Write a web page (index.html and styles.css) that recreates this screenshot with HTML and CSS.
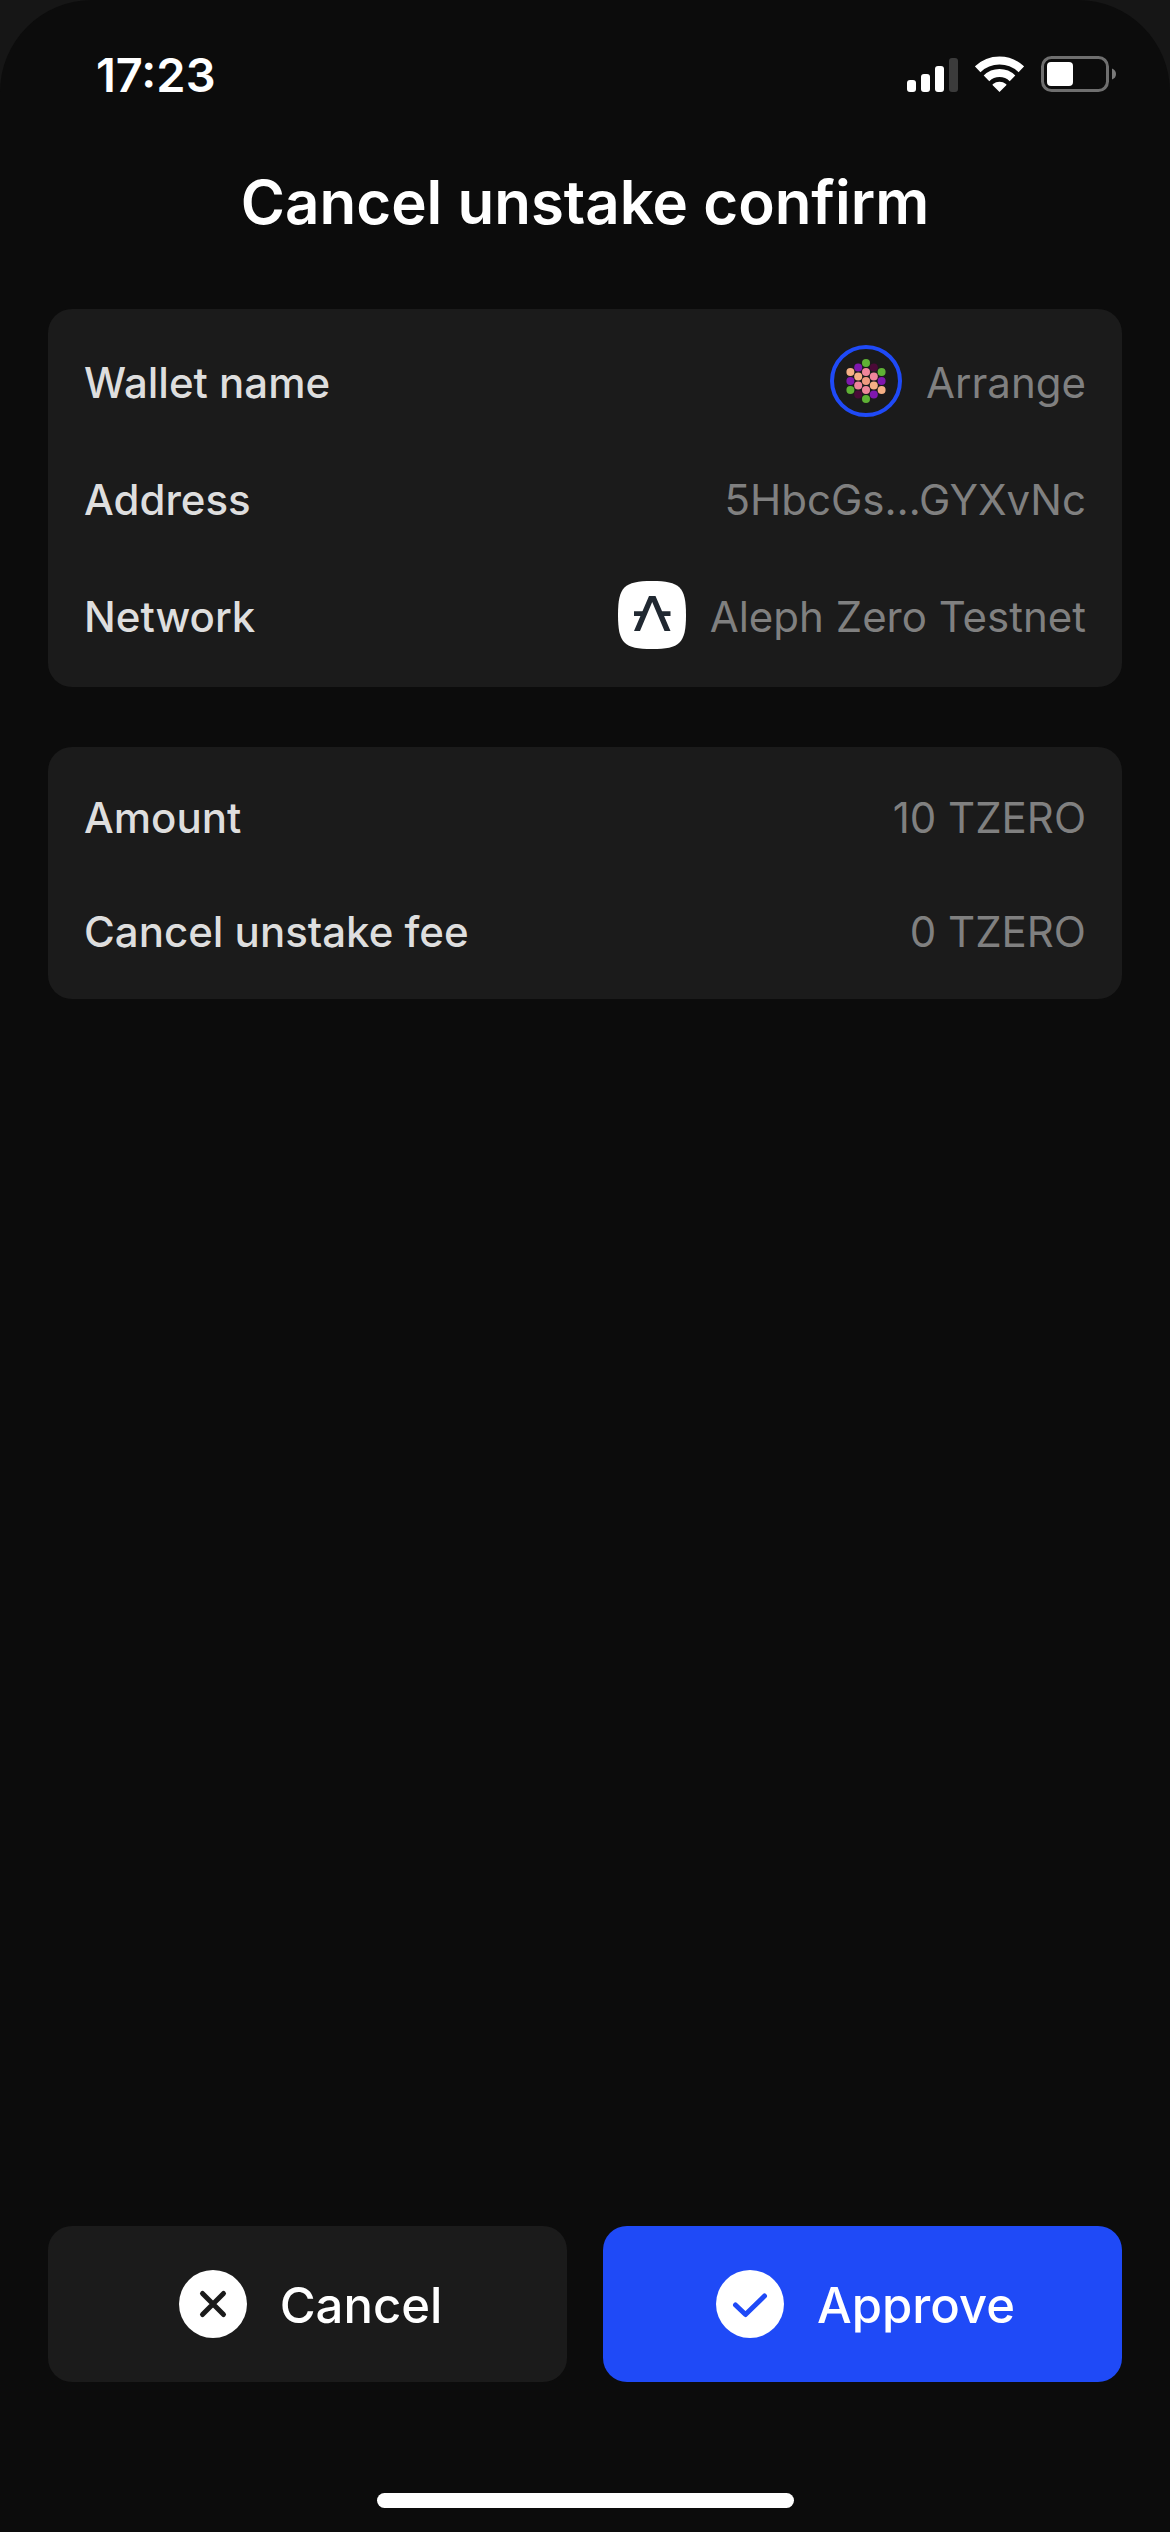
FILE: index.html
```html
<!DOCTYPE html>
<html lang="en">
<head>
<meta charset="utf-8">
<meta name="viewport" content="width=device-width, initial-scale=1">
<title>Cancel unstake confirm</title>
<link rel="stylesheet" href="styles.css">
</head>
<body>
<div class="screen">
  <header class="status">
    <time class="status-time">17:23</time>
    <div class="status-icons">
      <svg width="51" height="36" viewBox="0 0 51 36" fill="#fff" role="img" aria-label="Signal">
        <rect x="0" y="24" width="9" height="12" rx="3"/>
        <rect x="14" y="18" width="9" height="18" rx="3"/>
        <rect x="28" y="10" width="9" height="26" rx="3"/>
        <rect x="42" y="2" width="9" height="34" rx="3" fill="#3b3b3b"/>
      </svg>
      <svg width="49" height="36" viewBox="0 0 49 36" role="img" aria-label="Wi-Fi">
        <g fill="none" stroke="#fff" stroke-width="8">
          <path d="M2.7 13.3A31.5 31.5 0 0 1 46.3 13.3"/>
          <path d="M11.5 22.3A18.6 18.6 0 0 1 37.5 22.3"/>
        </g>
        <path d="M24.500 36L17.700 29.300Q17.200 28.600 18 28A10.500 10.500 0 0 1 31 28Q31.800 28.600 31.300 29.300Z" fill="#fff"/>
      </svg>
      <svg width="75" height="36" viewBox="0 0 75 36" role="img" aria-label="Battery">
        <rect x="1.500" y="1.500" width="65" height="33" rx="9" fill="none" stroke="#6f6f6f" stroke-width="3"/>
        <rect x="6" y="6" width="26" height="24" rx="4" fill="#fff"/>
        <path d="M71 12.500Q75 14 75 18T71 23.500Z" fill="#7a7a7a"/>
      </svg>
    </div>
  </header>

  <h1 class="title">Cancel unstake confirm</h1>

  <main class="content">
    <dl class="card">
      <div class="row">
        <dt class="label">Wallet name</dt>
        <dd class="value">
          <svg width="72" height="72" viewBox="0 0 72 72" aria-hidden="true">
            <circle cx="36" cy="36" r="34" fill="none" stroke="#1f4af7" stroke-width="4"/>
            <g fill="#5fb135"><circle cx="36" cy="18" r="4"/><circle cx="51.600" cy="27" r="4"/><circle cx="20.400" cy="45" r="4"/><circle cx="36" cy="54" r="4"/></g>
            <g fill="#7f17ae"><circle cx="28.200" cy="22.500" r="4"/><circle cx="20.400" cy="36" r="4"/><circle cx="51.600" cy="36" r="4"/><circle cx="43.800" cy="49.500" r="4"/></g>
            <g fill="#4a0a37"><circle cx="43.800" cy="22.500" r="4"/><circle cx="28.200" cy="49.500" r="4"/></g>
            <g fill="#f5b085"><circle cx="20.400" cy="27" r="4"/><circle cx="28.200" cy="31.500" r="4"/><circle cx="43.800" cy="40.500" r="4"/><circle cx="51.600" cy="45" r="4"/></g>
            <g fill="#ef859b"><circle cx="36" cy="27" r="4"/><circle cx="43.800" cy="31.500" r="4"/><circle cx="28.200" cy="40.500" r="4"/><circle cx="36" cy="45" r="4"/></g>
            <circle cx="36" cy="36" r="4" fill="#f09a80"/>
          </svg>
          <span class="text">Arrange</span>
        </dd>
      </div>
      <div class="row">
        <dt class="label">Address</dt>
        <dd class="value"><span class="text">5HbcGs…GYXvNc</span></dd>
      </div>
      <div class="row">
        <dt class="label">Network</dt>
        <dd class="value">
          <svg width="68" height="72" viewBox="0 0 68 72" aria-hidden="true">
            <path d="M0 36C0 8 6 2 34 2S68 8 68 36S62 70 34 70S0 64 0 36Z" fill="#fff"/>
            <path d="M31 17H37.500L52.500 52H46.500L34.200 23L22 52H16Z" fill="#202831"/>
            <path d="M16 32.200H25.500L23.500 37H16ZM43 32.200H52.500V37H45Z" fill="#202831"/>
          </svg>
          <span class="text">Aleph Zero Testnet</span>
        </dd>
      </div>
    </dl>

    <dl class="card">
      <div class="row">
        <dt class="label">Amount</dt>
        <dd class="value"><span class="text">10 TZERO</span></dd>
      </div>
      <div class="row">
        <dt class="label">Cancel unstake fee</dt>
        <dd class="value"><span class="text">0 TZERO</span></dd>
      </div>
    </dl>
  </main>

  <footer class="actions">
    <button type="button" class="btn">
      <svg width="68" height="68" viewBox="0 0 68 68" aria-hidden="true">
        <circle cx="34" cy="34" r="34" fill="#fff"/>
        <path d="M23.500 23.500L44.500 44.500M44.500 23.500L23.500 44.500" stroke="#1b1b1b" stroke-width="5" stroke-linecap="round"/>
      </svg>
      <span class="btn-text">Cancel</span>
    </button>
    <button type="button" class="btn btn-primary">
      <svg width="68" height="68" viewBox="0 0 68 68" aria-hidden="true">
        <circle cx="34" cy="34" r="34" fill="#fff"/>
        <path d="M19.500 35L29.500 44.500L48.500 26" fill="none" stroke="#1f4af7" stroke-width="5" stroke-linecap="round" stroke-linejoin="round"/>
      </svg>
      <span class="btn-text">Approve</span>
    </button>
  </footer>
  <div class="home-bar"></div>
</div>
</body>
</html>
```

FILE: styles.css
```css
* {
  box-sizing: border-box;
}

body {
  margin: 0;
  background: #161616;
  font-family: Inter, "Liberation Sans", sans-serif;
  color: #fff;
}

.screen {
  display: flex;
  flex-direction: column;
  min-height: 100vh;
  padding-bottom: 24px;
  background: #0c0c0c;
  border-radius: 92px 92px 0 0;
}

.status {
  display: flex;
  justify-content: space-between;
  align-items: center;
  height: 148px;
  padding: 0 54px 0 96px;
}

.status-time {
  font-size: 47px;
  font-weight: 600;
}

.status-icons {
  display: flex;
  gap: 17px;
}

.title {
  margin: 0;
  padding: 18px 48px;
  font-size: 60px;
  font-weight: 600;
  line-height: 72px;
  text-align: center;
}

.content {
  display: flex;
  flex: 1;
  flex-direction: column;
  gap: 60px;
  padding: 53px 48px;
}

.card {
  display: flex;
  flex-direction: column;
  gap: 48px;
  margin: 0;
  padding: 36px;
  background: #1b1b1b;
  border-radius: 24px;
}

.row {
  display: flex;
  justify-content: space-between;
  align-items: center;
  font-size: 42px;
  line-height: 62px;
}

.label,
.text {
  padding-top: 4px;
}

.label {
  color: #dedede;
  font-weight: 500;
}

.value {
  display: flex;
  align-items: center;
  gap: 24px;
  margin: 0;
  color: #808080;
}

.actions {
  display: flex;
  gap: 36px;
  padding: 0 48px;
}

.btn {
  display: flex;
  flex: 1;
  align-items: center;
  justify-content: center;
  gap: 33px;
  padding: 44px 34px 44px 40px;
  border: 0;
  border-radius: 24px;
  background: #1b1b1b;
  color: #fff;
  font: 500 49px/64px Inter, "Liberation Sans", sans-serif;
}

.btn-text {
  padding-top: 4px;
}

.btn-primary {
  background: #1f4af7;
}

.home-bar {
  align-self: center;
  width: 417px;
  height: 15px;
  margin-top: 111px;
  border-radius: 8px;
  background: #fff;
}
```
